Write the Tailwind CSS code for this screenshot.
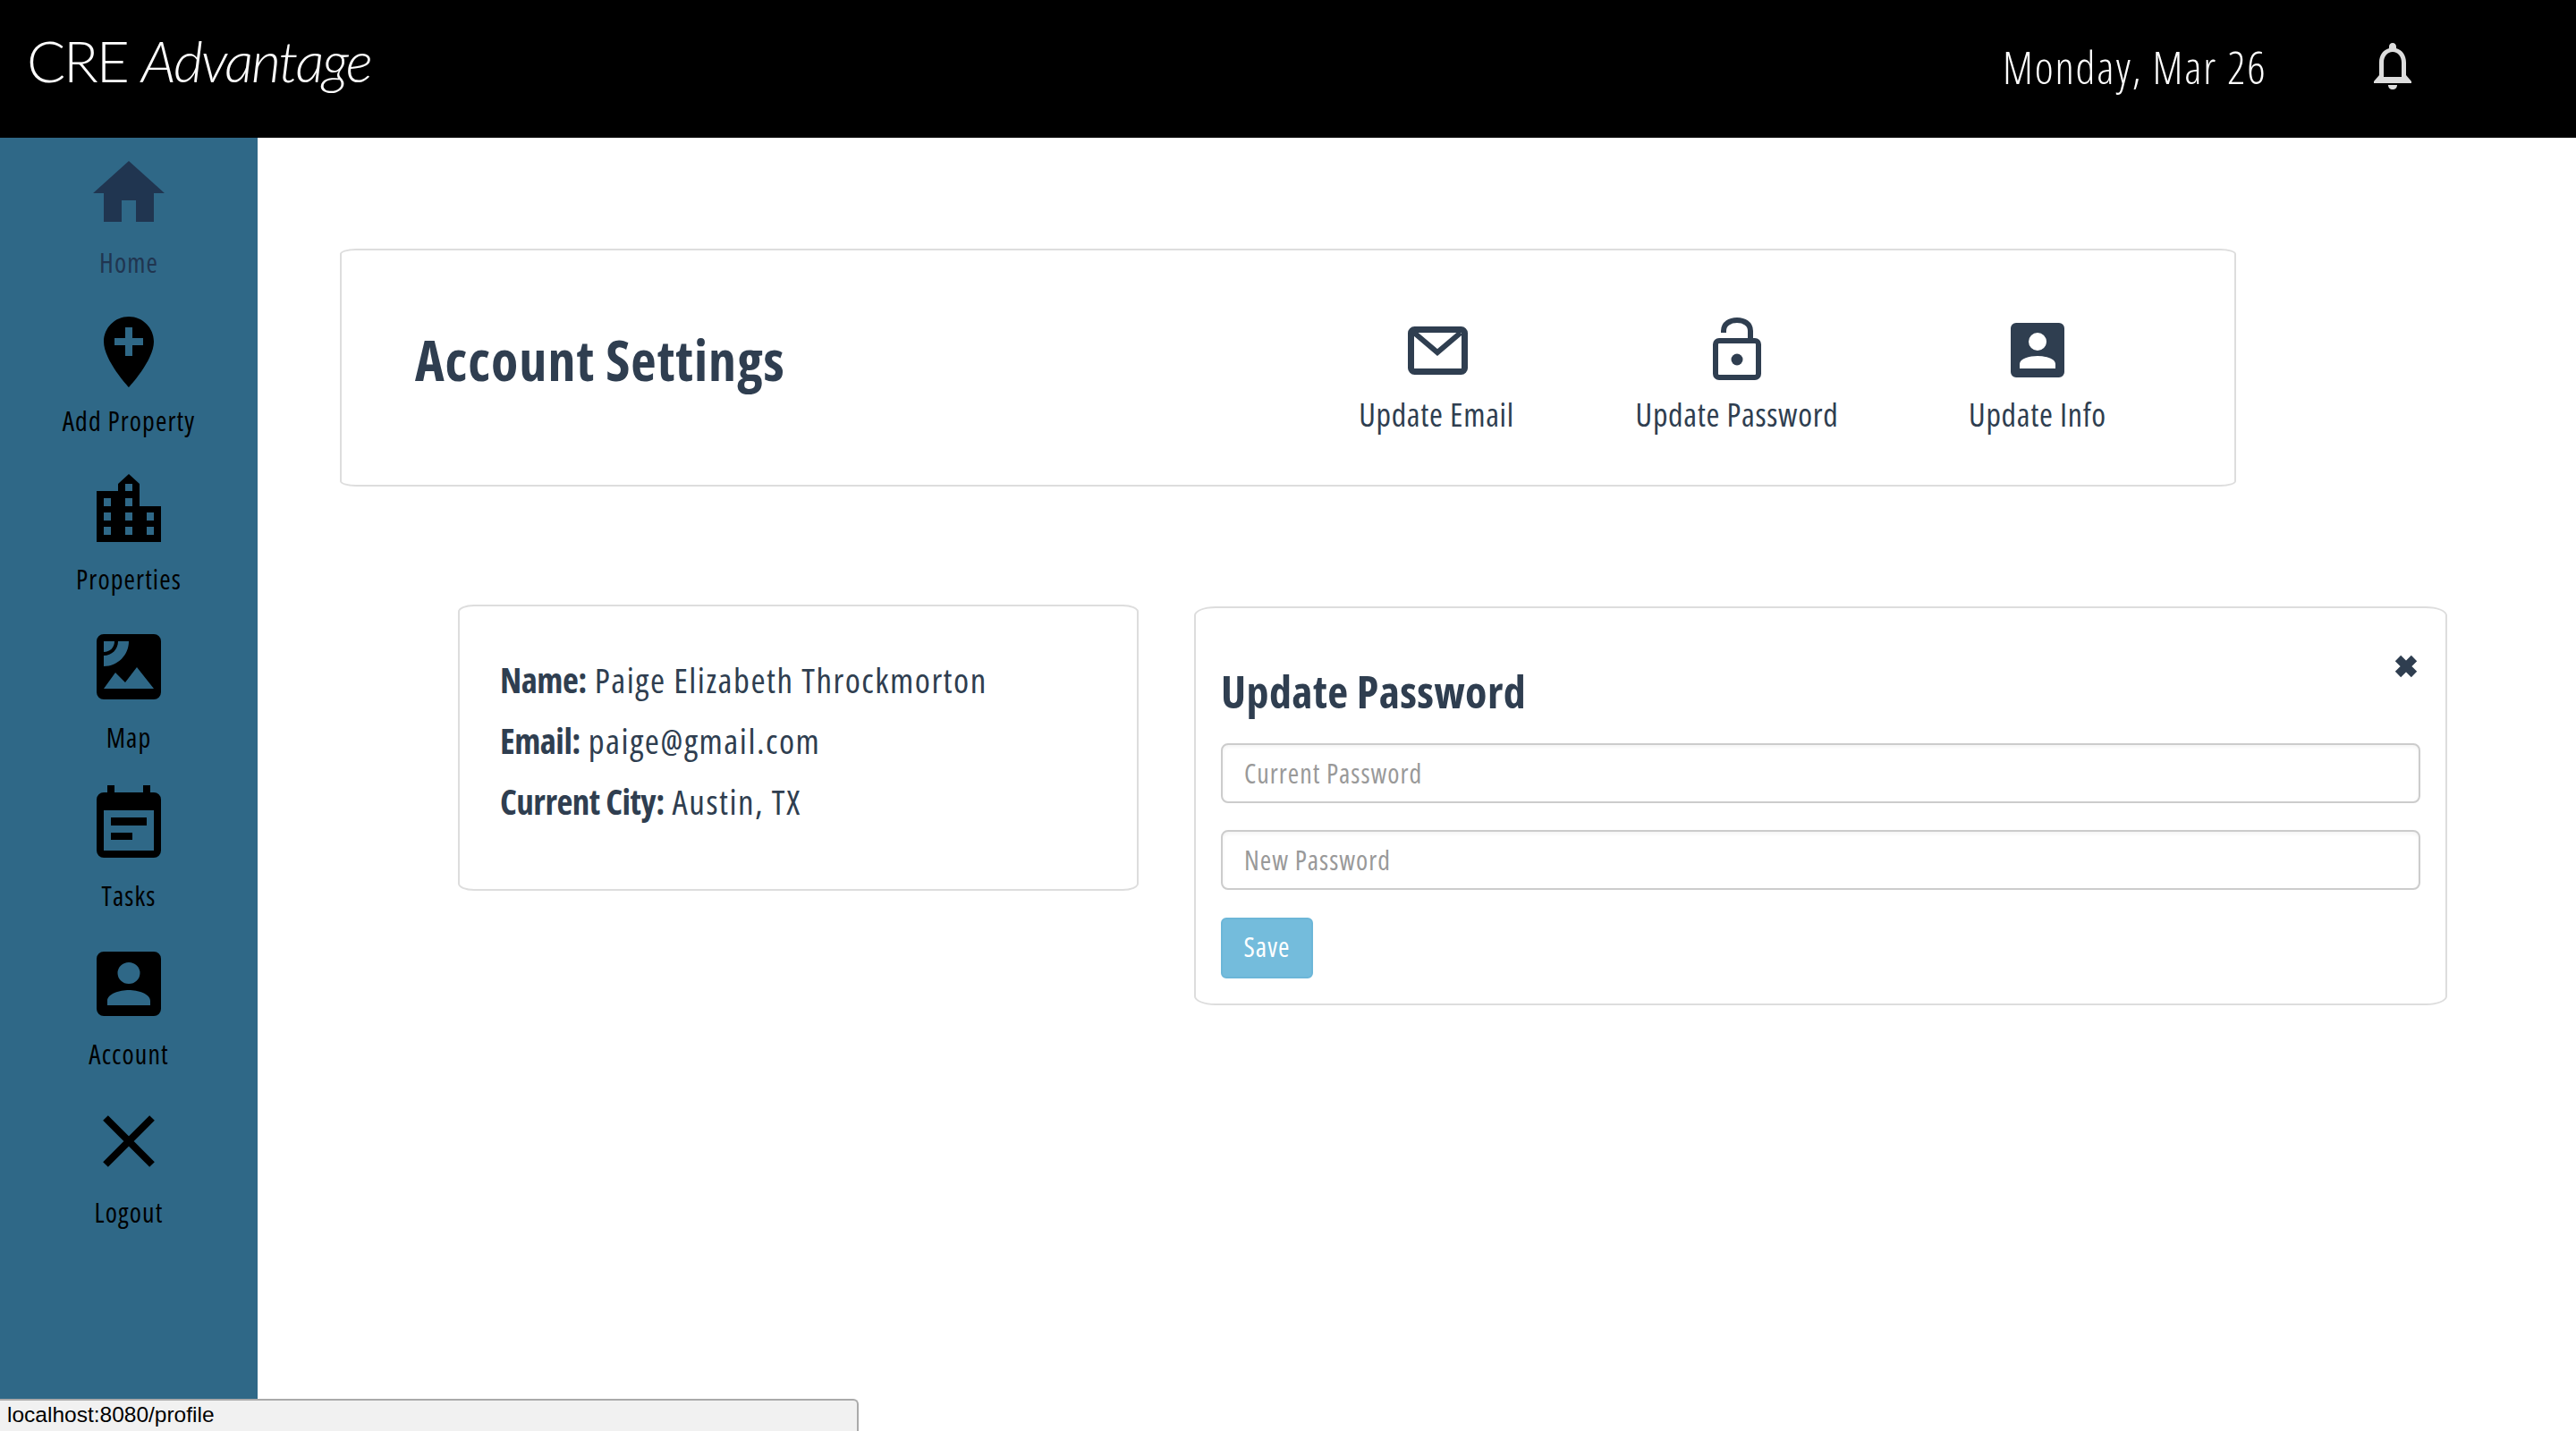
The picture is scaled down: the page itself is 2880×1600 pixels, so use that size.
<!DOCTYPE html>
<html lang="en">
<head>
<meta charset="utf-8">
<title>CRE Advantage</title>
<script src="https://cdn.jsdelivr.net/npm/@tailwindcss/browser@4"></script>
</head>
<body class="m-0 bg-white font-['Open_Sans','Noto_Sans',sans-serif] [font-stretch:75%]">
<div class="relative flex flex-col w-[2880px] h-[1600px] overflow-hidden">
  <header class="flex items-center h-[154px] shrink-0 bg-black text-white">
    <div class="pl-[30px] -mt-[19px] font-['Lato',sans-serif] [font-stretch:100%] text-[64px] font-light leading-none tracking-[-2.200px] whitespace-nowrap">CRE <em class="italic">Advantage</em></div>
    <div class="ml-auto -mt-[4px] w-[294px] mr-[347px] text-[50px] font-light leading-none tracking-[1.800px] whitespace-nowrap">Monday, Mar 26</div>
    <svg class="absolute left-[2654px] top-[48px]" width="42" height="52" viewBox="0 0 42 52" fill="#ddd" fill-rule="evenodd"><path d="M21 0c2.500 0 4 2 4 4v2c7 2 11 8 11 16v14l6 7v2H0v-2l6-7V22C6 14 10 8 17 6V4c0-2 1.500-4 4-4ZM21 10C15 10 11 15 11 22V38H31V22C31 15 27 10 21 10Z"/><path d="M16 47H26C26 50 24 52 21 52S16 50 16 47Z"/></svg>
  </header>
  <div class="flex flex-1 min-h-0">
    <aside class="flex flex-col items-center gap-[33px] w-[288px] shrink-0 pt-[14px] bg-[#2f6887] text-black text-[30px] leading-[36px] tracking-[1.100px]">
      <a class="flex flex-col items-center gap-[12px] text-[#203550]">
        <svg width="96" height="96" viewBox="0 0 96 96" fill="#203550" fill-rule="evenodd"><path d="M48 12 88 48H76V80H56V56H40V80H20V48H8Z"/></svg>
        <span>Home</span>
      </a>
      <a class="flex flex-col items-center gap-[12px]">
        <svg width="96" height="96" viewBox="0 0 96 96" fill="#000" fill-rule="evenodd"><path d="M48 9C32.500 9 20 21.500 20 37 20 58 48 88 48 88S76 58 76 37C76 21.500 63.500 9 48 9ZM44 21H52V33H64V41H52V53H44V41H32V33H44Z"/></svg>
        <span>Add Property</span>
      </a>
      <a class="flex flex-col items-center gap-[12px]">
        <svg width="96" height="96" viewBox="0 0 96 96" fill="#000" fill-rule="evenodd"><path d="M48 8 60 19V44H84V84H12V27H36V19ZM44 19V27H52V19ZM20 35V44H28V35ZM44 35V44H52V35ZM20 51V60H28V51ZM44 51V60H52V51ZM68 51V60H76V51ZM20 67V76H28V67ZM44 67V76H52V67ZM68 67V76H76V67Z"/></svg>
        <span>Properties</span>
      </a>
      <a class="flex flex-col items-center gap-[12px]">
        <svg width="96" height="96" viewBox="0 0 96 96" fill="#000" fill-rule="evenodd"><path d="M20 10H76A8 8 0 0 1 84 18V75A8 8 0 0 1 76 83H20A8 8 0 0 1 12 75V18A8 8 0 0 1 20 10ZM20 18V30C27 30 32 25 32 18ZM36 18C36 27 29 34 20 34V46C36 46 48 33 48 18ZM20 71H76L57 47 44 64 33 53Z"/></svg>
        <span>Map</span>
      </a>
      <a class="flex flex-col items-center gap-[12px]">
        <svg width="96" height="96" viewBox="0 0 96 96" fill="#000" fill-rule="evenodd"><path d="M24 2H32V10H64V2H72V10H76A8 8 0 0 1 84 18V75A8 8 0 0 1 76 83H20A8 8 0 0 1 12 75V18A8 8 0 0 1 20 10H24ZM20 30V75H76V30ZM28 38H68V47H28ZM28 55H52V63H28Z"/></svg>
        <span>Tasks</span>
      </a>
      <a class="flex flex-col items-center gap-[12px]">
        <svg width="96" height="96" viewBox="0 0 96 96" fill="#000" fill-rule="evenodd"><path d="M20 11H76A8 8 0 0 1 84 19V75A8 8 0 0 1 76 83H20A8 8 0 0 1 12 75V19A8 8 0 0 1 20 11ZM48 23A12.500 12 0 0 0 48 47 12.500 12 0 0 0 48 23ZM24 71H72V66C72 58 58 54 48 54S24 58 24 66Z"/></svg>
        <span>Account</span>
      </a>
      <a class="flex flex-col items-center gap-[12px]">
        <svg width="96" height="96" viewBox="0 0 96 96" fill="none" stroke="#000" stroke-width="8"><path d="M22 20 74 72M74 20 22 72"/></svg>
        <span>Logout</span>
      </a>
    </aside>
    <main class="flex-1 min-w-0 pl-[92px] pt-[124px] text-[#2f3e50]">
      <section class="flex w-[2120px] h-[266px] border-2 border-[#ddd] rounded-[18px/6px]">
        <h1 class="flex-1 pl-[82px] pt-[84px] text-[62px] leading-[76px] font-bold tracking-[1px] whitespace-nowrap">Account Settings</h1>
        <nav class="flex pr-[52px] pt-[73px] text-[36px] leading-[40px] tracking-[0.700px]">
          <a class="flex flex-col items-center w-[336px] gap-[19px]">
            <svg class="translate-x-[1px]" width="72" height="72" viewBox="0 0 72 72" fill="none" stroke="#2f3e50" stroke-width="7"><rect x="6.500" y="15.500" width="60" height="47" rx="4"/><path d="M10 19 36 41 62 19" stroke-width="6"/></svg>
            <span>Update Email</span>
          </a>
          <a class="flex flex-col items-center w-[336px] gap-[19px]">
            <svg width="72" height="72" viewBox="0 0 72 72" fill="none" stroke="#2f3e50" stroke-width="6"><rect x="12" y="28" width="48" height="41" rx="4"/><path d="M21 19V17C21 9 28 5 36 5S51 9 51 17V26"/><circle cx="36" cy="49" r="6.500" fill="#2f3e50" stroke="none"/></svg>
            <span>Update Password</span>
          </a>
          <a class="flex flex-col items-center w-[336px] gap-[19px]">
            <svg width="72" height="72" viewBox="0 0 72 72" fill="#2f3e50" fill-rule="evenodd"><path d="M12 8H60A6 6 0 0 1 66 14V63A6 6 0 0 1 60 69H12A6 6 0 0 1 6 63V14A6 6 0 0 1 12 8ZM36 19A10 10 0 0 0 36 39 10 10 0 0 0 36 19ZM16 59H56V54C56 48 45 45 36 45S16 48 16 54Z"/></svg>
            <span>Update Info</span>
          </a>
        </nav>
      </section>
      <div class="flex items-start mt-[132px] pl-[132px]">
        <section class="w-[761px] h-[320px] border-2 border-[#ddd] rounded-[18px/8px] pt-[48px] pl-[45px] text-[39px] leading-[68px] tracking-[1.500px]">
          <p><b class="font-bold tracking-[-0.500px]">Name:</b> Paige Elizabeth Throckmorton</p>
          <p><b class="font-bold tracking-[-0.500px]">Email:</b> paige@gmail.com</p>
          <p><b class="font-bold tracking-[-0.500px]">Current City:</b> Austin, TX</p>
        </section>
        <section class="relative flex flex-col items-start w-[1401px] h-[446px] ml-[62px] mt-[2px] border-2 border-[#ddd] rounded-[24px/10px] pt-[63px] pl-[28px] pr-[28px]">
          <h2 class="text-[50px] leading-[60px] font-bold tracking-[0.400px] whitespace-nowrap">Update Password</h2>
          <svg class="absolute right-[31px] top-[52px]" width="26" height="26" viewBox="0 0 26 26" fill="none" stroke="#2f3e50" stroke-width="9"><path d="M4 4 22 22M22 4 4 22"/></svg>
          <input class="w-full h-[67px] mt-[28px] pl-[24px] pr-[24px] border-2 border-[#ccc] rounded-[8px] shadow-inner text-[30px] tracking-[1px] placeholder:text-[#999] outline-none" placeholder="Current Password">
          <input class="w-full h-[67px] mt-[30px] pl-[24px] pr-[24px] border-2 border-[#ccc] rounded-[8px] shadow-inner text-[30px] tracking-[1px] placeholder:text-[#999] outline-none" placeholder="New Password">
          <button class="w-[103px] h-[68px] mt-[31px] pb-[4px] bg-[#74bcdc] border-2 border-[#6cb6d8] rounded-[6px] text-white text-[30px] tracking-[1px]">Save</button>
        </section>
      </div>
    </main>
  </div>
  <div class="absolute left-0 bottom-0 w-[960px] h-[36px] pl-[8px] bg-[#f1f1f1] border-t-2 border-r-2 border-[#aaa] rounded-tr-[6px] font-['Liberation_Sans',sans-serif] [font-stretch:100%] text-[24.500px] leading-[32px] text-black">localhost:8080/profile</div>
</div>
</body>
</html>
